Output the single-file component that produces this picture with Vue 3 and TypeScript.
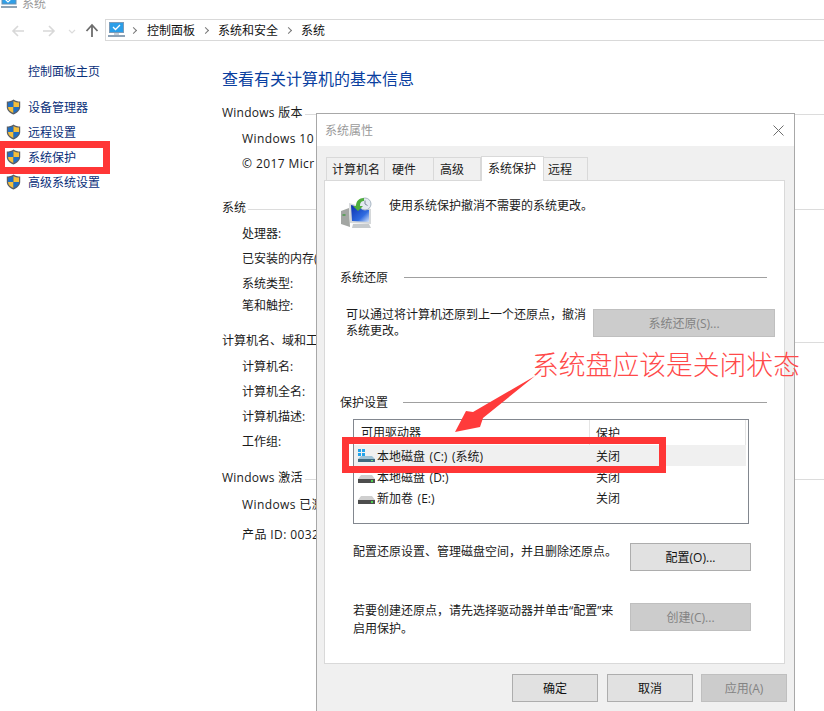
<script setup lang="ts">
const sideLinks: string[] = ['设备管理器', '远程设置', '系统保护', '高级系统设置']

interface Section {
  title: string
  cls: string
  rows: { text: string; cls?: string }[]
}

const sections: Section[] = [
  {
    title: 'Windows 版本',
    cls: 'sec-version',
    rows: [{ text: 'Windows 10' }, { text: '© 2017 Micr' }],
  },
  {
    title: '系统',
    cls: 'sec-system',
    rows: [
      { text: '处理器:' },
      { text: '已安装的内存(' },
      { text: '系统类型:' },
      { text: '笔和触控:', cls: 'row-short' },
    ],
  },
  {
    title: '计算机名、域和工',
    cls: 'sec-name',
    rows: [{ text: '计算机名:' }, { text: '计算机全名:' }, { text: '计算机描述:' }, { text: '工作组:' }],
  },
  {
    title: 'Windows 激活',
    cls: 'sec-activate',
    rows: [{ text: 'Windows 已激' }, { text: '产品 ID: 0032', cls: 'row-gap' }],
  },
]

const tabs = [
  { label: '计算机名', cls: 'tab-name' },
  { label: '硬件', cls: 'tab-hw' },
  { label: '高级', cls: 'tab-adv' },
  { label: '系统保护', cls: 'tab-active' },
  { label: '远程', cls: 'tab-remote' },
]

const drives = [
  { name: '本地磁盘 (C:) (系统)', state: '关闭', system: true },
  { name: '本地磁盘 (D:)', state: '关闭', system: false },
  { name: '新加卷 (E:)', state: '关闭', system: false },
]
</script>

<template>
  <div class="page">
    <div class="titlebar">
      <svg class="title-icon" width="16" height="15" viewBox="0 0 16 15">
        <rect x="1" y="0" width="14" height="9" fill="#2f9fe8" stroke="#6b8fb0" />
        <path d="M4 4l3 3 5-5" fill="none" stroke="#fff" stroke-width="1.2" />
        <rect x="0" y="11" width="16" height="2" fill="#8fa3b5" />
      </svg>
      <span class="title-text">系统</span>
    </div>

    <div class="nav">
      <svg class="nav-arrows" width="105" height="22" viewBox="0 0 105 22">
        <path d="M24 12H13M18 7l-5 5 5 5" fill="none" stroke="#d8d8d8" stroke-width="1.6" />
        <path d="M43 12H54M49 7l5 5-5 5" fill="none" stroke="#d8d8d8" stroke-width="1.6" />
        <path d="M69 11l3 3 3-3" fill="none" stroke="#dcdcdc" stroke-width="1.2" />
        <path d="M92 18V7M86.5 12l5.5-6 5.5 6" fill="none" stroke="#6d6d6d" stroke-width="1.8" />
      </svg>
      <div class="address">
        <svg class="addr-icon" width="17" height="16" viewBox="0 0 17 16">
          <rect x="1.5" y="0.5" width="14" height="10" fill="#2a9ee8" stroke="#7b9bb8" />
          <path d="M5 5l2.5 2.5 4.5-4.5" fill="none" stroke="#fff" stroke-width="1.3" />
          <rect x="6" y="11" width="5" height="2" fill="#c3ced8" />
          <rect x="0" y="13" width="17" height="2" fill="#8da2b6" />
        </svg>
        <span class="chev" />
        <span class="crumb">控制面板</span>
        <span class="chev" />
        <span class="crumb">系统和安全</span>
        <span class="chev" />
        <span class="crumb">系统</span>
      </div>
    </div>

    <div class="main">
      <aside class="sidebar">
        <a class="home">控制面板主页</a>
        <ul class="side-list">
          <li v-for="link in sideLinks" :key="link" class="side-item">
            <svg width="15" height="16" viewBox="0 0 15 16">
              <path d="M7.5.5C5.5 2 3 2.5.8 2.5V8c0 3.5 3 6 6.7 7.5C11 14 14.2 11.5 14.2 8V2.5C12 2.5 9.5 2 7.5.5z" fill="#5a5f66" />
              <path d="M7.5 2C6 3 4 3.5 2 3.6V8h5.5z" fill="#1f6fc4" />
              <path d="M7.5 2c1.5 1 3.5 1.5 5.5 1.6V8H7.5z" fill="#f5bf3b" />
              <path d="M2 8h5.5v6C4.5 13 2 11 2 8z" fill="#f5bf3b" />
              <path d="M13 8H7.5v6c3-1 5.5-3 5.5-6z" fill="#1f6fc4" />
            </svg>
            <a>{{ link }}</a>
          </li>
        </ul>
      </aside>

      <section class="content">
        <h1 class="heading">查看有关计算机的基本信息</h1>
        <div v-for="s in sections" :key="s.title" class="info" :class="s.cls">
          <div class="info-head">
            <span>{{ s.title }}</span>
            <i class="info-line" />
          </div>
          <div class="info-rows">
            <div v-for="r in s.rows" :key="r.text" class="info-row" :class="r.cls">{{ r.text }}</div>
          </div>
        </div>
      </section>
    </div>

    <div class="dialog">
      <div class="dlg-title">
        <span>系统属性</span>
        <svg width="11" height="11" viewBox="0 0 11 11">
          <path d="M.5.5l10 10M10.5.5l-10 10" stroke="#6e6e6e" stroke-width="1" fill="none" />
        </svg>
      </div>
      <div class="dlg-body">
        <div class="tabs">
          <div v-for="t in tabs" :key="t.label" class="tab" :class="t.cls">{{ t.label }}</div>
        </div>
        <div class="panel">
          <div class="intro">
            <svg width="33" height="34" viewBox="0 0 33 34">
              <defs>
                <linearGradient id="scr" x1="0" y1="0" x2="1" y2="1">
                  <stop offset="0" stop-color="#0a2fae" />
                  <stop offset="0.65" stop-color="#2f6be0" />
                  <stop offset="1" stop-color="#d5e4fa" />
                </linearGradient>
              </defs>
              <path d="M1 16l8-3 1 19-9-3z" fill="#a3a6a3" />
              <rect x="2.5" y="19" width="3" height="2" fill="#5f9e5f" />
              <path d="M9 8l22 6v15l-21-1z" fill="#d5d8da" />
              <path d="M11 10l18 5v12l-17-1z" fill="url(#scr)" />
              <path d="M13 29h16l2 4H12z" fill="#c6cacd" />
              <circle cx="25" cy="9" r="6" fill="#e3e9f0" stroke="#a9b6c4" />
              <path d="M25 5.5v3.500l2.500 1.500" stroke="#7d8a99" fill="none" />
              <path d="M16 11c0-5 3-8 8-8v3c-2 0-4 1-4 5h3l-5 5-5-5z" fill="#4fae3c" />
            </svg>
            <p>使用系统保护撤消不需要的系统更改。</p>
          </div>

          <div class="legend legend-restore"><span>系统还原</span><i /></div>
          <div class="restore">
            <p>可以通过将计算机还原到上一个还原点，撤消<br />系统更改。</p>
            <button class="btn btn-off btn-restore">系统还原(S)...</button>
          </div>

          <div class="legend legend-protect"><span>保护设置</span><i /></div>
          <div class="list">
            <div class="list-head">
              <span class="col-a">可用驱动器</span>
              <span class="col-b">保护</span>
            </div>
            <div v-for="d in drives" :key="d.name" class="list-row" :class="{ selected: d.system }">
              <span class="drive-cell">
                <svg width="17" height="15" viewBox="0 0 17 15">
                  <template v-if="d.system">
                    <path d="M0 1h3v3H0zM4 1h3v3H4zM0 5h3v3H0zM4 5h3v3H4z" fill="#23a4ea" />
                    <path d="M3 8h11l3 3v3H0v-3z" fill="#9fc3d6" />
                    <rect x="0" y="11" width="17" height="3" fill="#3f6b80" />
                    <rect x="13" y="12" width="2" height="1" fill="#7de07d" />
                  </template>
                  <template v-else>
                    <path d="M3 6h11l3 4v1H0v-1z" fill="#cfcfcf" />
                    <rect x="0" y="10" width="17" height="4" fill="#4d4d4d" />
                    <rect x="13" y="11" width="2" height="2" fill="#4fd24f" />
                  </template>
                </svg>
                <span>{{ d.name }}</span>
              </span>
              <span class="col-b">{{ d.state }}</span>
            </div>
          </div>

          <div class="action action-config">
            <p>配置还原设置、管理磁盘空间，并且删除还原点。</p>
            <button class="btn btn-side">配置(O)...</button>
          </div>
          <div class="action action-create">
            <p>若要创建还原点，请先选择驱动器并单击“配置”来<br />启用保护。</p>
            <button class="btn btn-off btn-side">创建(C)...</button>
          </div>
        </div>
        <div class="footer">
          <button class="btn btn-foot">确定</button>
          <button class="btn btn-foot">取消</button>
          <button class="btn btn-off btn-foot">应用(A)</button>
        </div>
      </div>
    </div>

    <div class="mark mark-side" />
    <div class="mark mark-drive" />
    <svg class="arrow" width="90" height="64" viewBox="0 0 90 64">
      <polygon points="1,62 12,41 19,42 81,6 29,48 26,57" fill="#ff3b3b" />
    </svg>
    <div class="note">系统盘应该是关闭状态</div>
  </div>
</template>

<style>
html, body { margin: 0; padding: 0; background: #fff; }
</style>

<style scoped>
.page {
  position: relative;
  width: 824px;
  height: 711px;
  overflow: hidden;
  background: #fff;
  color: #1a1a1a;
  font-family: "Open Sans", "Noto Sans CJK SC", sans-serif;
  font-size: 12px;
}
.titlebar {
  height: 14px;
  display: flex;
  align-items: flex-start;
  overflow: hidden;
  padding-left: 1px;
}
.title-icon { margin-top: -5px; flex: none; }
.title-text { margin: -6px 0 0 5px; color: #9a9a9a; line-height: 20px; }
.nav { height: 27px; display: flex; align-items: flex-start; padding-top: 5px; box-sizing: border-box; }
.nav-arrows { flex: none; }
.address {
  flex: 1;
  height: 22px;
  margin-right: -2px;
  border: 1px solid #d9d9d9;
  box-sizing: border-box;
  display: flex;
  align-items: center;
  padding-left: 2px;
}
.addr-icon { flex: none; }
.chev {
  flex: none;
  width: 4px;
  height: 4px;
  margin: 0 11px 0 6px;
  border-top: 1.5px solid #777;
  border-right: 1.5px solid #777;
  transform: rotate(45deg);
}
.crumb { color: #111; }
.crumb + .chev { margin: 0 10px 0 8px; }
.main { display: flex; }
.sidebar { flex: none; width: 222px; padding-top: 21px; box-sizing: border-box; }
.home { display: block; margin-left: 28px; line-height: 20px; color: #0a2f7a; }
.side-list { list-style: none; margin: 12px 0 0; padding: 0; }
.side-item { height: 25px; display: flex; align-items: center; padding-left: 6px; color: #0a2f7a; }
.side-item a { margin-left: 7px; }
.content { flex: 1; padding-top: 26px; }
.heading { margin: 0; font-weight: 400; font-size: 16px; line-height: 24px; color: #0a3fa0; }
.info-head { height: 20px; display: flex; align-items: center; white-space: nowrap; letter-spacing: 0.25px; }
.info-line { flex: 1; height: 1px; margin: 4px 0 0 2px; background: #dcdcdc; }
.info-rows { margin-top: 4px; padding-left: 20px; }
.info-row { height: 25px; line-height: 25px; white-space: nowrap; }
.sec-version .info-row,
.sec-activate .info-row { letter-spacing: 0.4px; }
.sec-version { margin-top: 11px; }
.sec-system { margin-top: 21px; }
.sec-name { margin-top: 14px; }
.sec-name .info-head { letter-spacing: 0; }
.sec-system .info-head { letter-spacing: 0; }
.sec-activate { margin-top: 13px; }
.sec-activate .info-rows { margin-top: 5px; }
.row-short { height: 20px; line-height: 20px; }
.row-gap { margin-top: 5px; }

.dialog {
  position: absolute;
  left: 316px;
  top: 113px;
  width: 479px;
  height: 610px;
  box-sizing: border-box;
  border: 1px solid #a8a8a8;
  background: #f0f0f0;
}
.dlg-title {
  height: 32px;
  background: #fff;
  display: flex;
  align-items: center;
  justify-content: space-between;
  padding: 0 10px 0 8px;
  color: #9a9a9a;
}
.dlg-body { padding-left: 7px; }
.tabs { height: 25px; display: flex; align-items: flex-end; padding-top: 9px; padding-left: 2px; }
.tab {
  height: 23px;
  box-sizing: border-box;
  border: 1px solid #d9d9d9;
  border-bottom: 0;
  border-left: 0;
  background: #f0f0f0;
  line-height: 23px;
  padding-left: 7px;
}
.tab-name { width: 59px; border-left: 1px solid #d9d9d9; padding-left: 5px; }
.tab-hw { width: 49px; }
.tab-adv { width: 47px; padding-left: 6px; }
.tab-active {
  width: 63px;
  height: 25px;
  background: #fff;
  border-left: 1px solid #d9d9d9;
  margin-bottom: -1px;
  padding-left: 6px;
  position: relative;
  z-index: 1;
}
.tab-remote { width: 44px; padding-left: 4px; }
.panel {
  height: 484px;
  margin-right: 9px;
  box-sizing: border-box;
  border: 1px solid #d9d9d9;
  background: #fff;
  padding: 14px 9px 0 15px;
  color: #1a1a1a;
}
.panel p { margin: 0; }
.intro { display: flex; height: 33px; }
.intro svg { flex: none; }
.intro p { margin: 2px 0 0 16px; line-height: 18px; }
.legend { display: flex; align-items: center; height: 18px; margin-right: 8px; }
.legend i { flex: 1; height: 1px; background: #a0a0a0; margin-left: 16px; }
.legend-restore { margin-top: 40px; }
.legend-protect { margin-top: 54px; }
.legend-protect i { margin-left: 15px; }
.restore { margin-top: 21px; display: flex; align-items: center; justify-content: space-between; padding-left: 6px; }
.restore p { line-height: 16px; }
.btn {
  box-sizing: border-box;
  height: 28px;
  border: 1px solid #adadad;
  background: #e1e1e1;
  color: #111;
  font: inherit;
  padding: 0;
}
.btn-off { background: #cccccc; border-color: #bfbfbf; color: #838383; }
.btn-restore { width: 182px; }
.list {
  margin: 8px 0 0 13px;
  width: 396px;
  height: 105px;
  box-sizing: border-box;
  border: 1px solid #82878f;
  padding-right: 2px;
}
.list-head { height: 25px; display: flex; align-items: center; border-right: 1px solid #e5e5e5; }
.col-a { width: 236px; padding-left: 7px; box-sizing: border-box; border-right: 1px solid #e5e5e5; line-height: 25px; flex: none; }
.col-b { padding-left: 6px; }
.list-row { height: 21px; display: flex; align-items: center; }
.list-row.selected { background: #f0f0f0; }
.drive-cell { width: 236px; flex: none; display: flex; align-items: center; gap: 2px; padding-left: 4px; box-sizing: border-box; white-space: nowrap; word-spacing: 1.5px; }
.action { display: flex; justify-content: space-between; align-items: flex-start; padding: 0 24px 0 13px; }
.action-config { margin-top: 19px; }
.action-config p { line-height: 18px; }
.action-create { margin-top: 32px; }
.action-create p { line-height: 18px; margin-top: -1px; }
.btn-side { width: 121px; flex: none; }
.footer { display: flex; justify-content: flex-end; gap: 9px; margin: 10px 7px 0 0; }
.btn-foot { width: 86px; }
.btn-foot:last-child { margin-left: -1px; }

.mark { position: absolute; border: 7px solid #ff3636; box-sizing: border-box; }
.mark-side { left: -2px; top: 141px; width: 112px; height: 33px; }
.mark-drive { left: 342px; top: 437px; width: 324px; height: 36px; }
.arrow { position: absolute; left: 454px; top: 370px; }
.note {
  position: absolute;
  left: 532px;
  top: 347px;
  font-size: 26.8px;
  line-height: 34px;
  color: #ff4a4a;
  white-space: nowrap;
  font-family: "Noto Sans CJK SC", sans-serif;
  font-weight: 300;
}
</style>
